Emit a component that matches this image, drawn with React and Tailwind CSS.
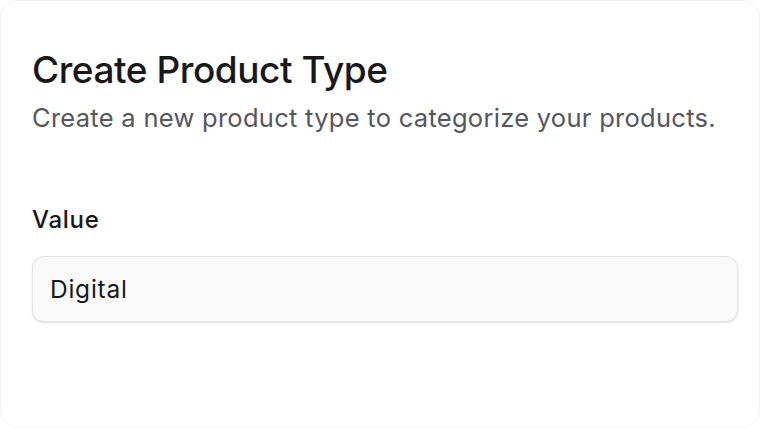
export default function App() {
  return (
    <div className="w-[760px] h-[428px] bg-white" style={{ fontFamily: 'Inter, "Noto Sans", sans-serif' }}>
      <div className="h-full rounded-[18px] border border-[#f3f3f3] bg-white px-[31px] pt-[47px]">
        <h1 className="text-[37px] leading-[44px] font-medium text-[#18181b] tracking-[-0.45px]">Create Product Type</h1>
        <p className="mt-[10px] text-[25.5px] leading-[32px] text-[#56565e] tracking-[0.28px]">
          Create a new product type to categorize your products.
        </p>
        <div className="mt-[71px]">
          <label className="block text-[24px] leading-[30px] font-medium text-[#18181b] tracking-[0.7px]">Value</label>
          <div className="mt-[21px] h-[66px] mr-[-10px] rounded-[12px] border border-[#e5e5e5] bg-[#fafafa] shadow-[0_1px_2px_rgba(0,0,0,0.12)] flex items-center px-[17px]">
            <span className="text-[24.5px] text-[#18181b] tracking-[0.75px]">Digital</span>
          </div>
        </div>
      </div>
    </div>
  );
}
